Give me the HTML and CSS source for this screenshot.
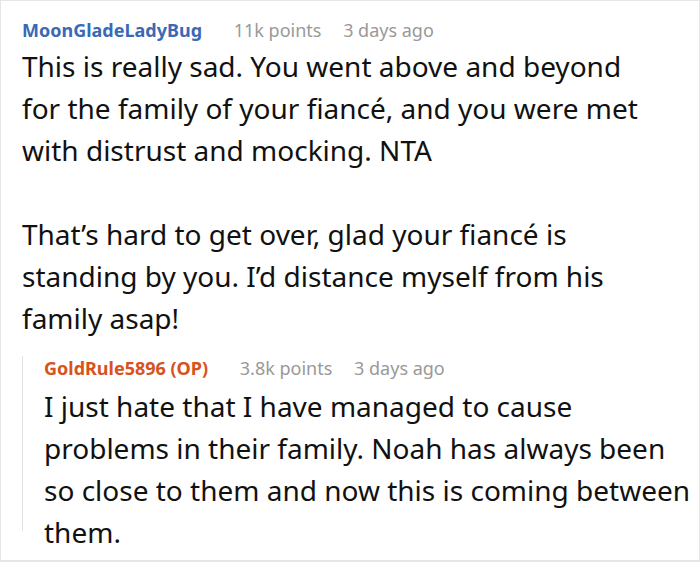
FILE: index.html
```html
<!DOCTYPE html>
<html>
<head>
<meta charset="utf-8">
<link rel="stylesheet" href="styles.css">
</head>
<body>
<div class="frame">
  <div class="comment">
    <div class="meta">
      <span class="user">MoonGladeLadyBug</span>
      <span class="points">11k points</span>
      <span class="time">3 days ago</span>
    </div>
    <div class="text">
      <p>This is really sad. You went above and beyond for the family of your fiancé, and you were met with distrust and mocking. NTA</p>
      <p>That’s hard to get over, glad your fiancé is standing by you. I’d distance myself from his family asap!</p>
    </div>
  </div>
  <div class="reply">
    <div class="meta">
      <span class="user op">GoldRule5896 (OP)</span>
      <span class="points">3.8k points</span>
      <span class="time">3 days ago</span>
    </div>
    <div class="text">
      <p>I just hate that I have managed to cause problems in their family. Noah has always been so close to them and now this is coming between them.</p>
    </div>
  </div>
</div>
</body>
</html>
```
FILE: styles.css
```css
html, body {
  margin: 0;
  padding: 0;
  background: #ffffff;
}
.frame {
  width: 700px;
  height: 562px;
  box-sizing: border-box;
  border: 1px solid #e6e6e6;
  border-bottom-width: 2px;
  padding: 17px 0 0 21px;
  font-family: "Noto Sans", "Open Sans", sans-serif;
  color: #111111;
  overflow: hidden;
}
.meta {
  font-size: 18px;
  line-height: 24px;
  white-space: nowrap;
}
.user {
  font-weight: 700;
  color: #3a69b5;
  margin-right: 27px;
}
.user.op {
  color: #d8521c;
}
.points {
  color: #999999;
  margin-right: 17px;
}
.time {
  color: #999999;
}
.text {
  font-size: 28px;
  line-height: 42px;
  margin-top: 3px;
}
.comment .text {
  width: 630px;
}
.text p {
  margin: 0 0 42px 0;
}
.text p:last-child {
  margin-bottom: 0;
}
.reply {
  margin-top: 29px;
  border-left: 1px solid #e2e2e2;
  padding-left: 21px;
  height: 175px;
}
.reply .meta {
  margin-top: -12px;
}
.reply .text {
  margin-top: 5px;
  width: 652px;
}
```
